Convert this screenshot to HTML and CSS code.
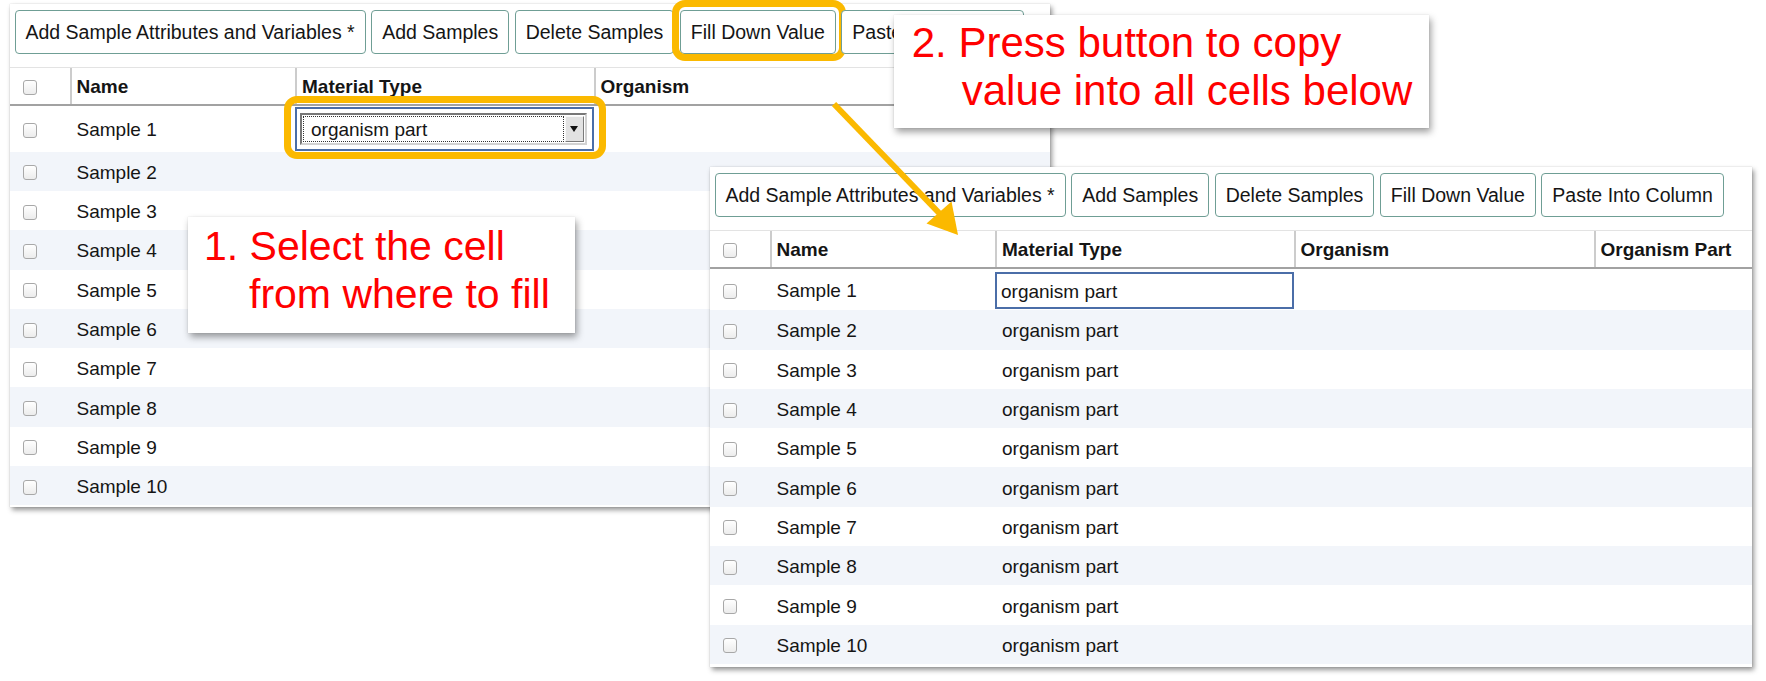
FILE: index.html
```html
<!DOCTYPE html>
<html lang="en">
<head>
<meta charset="utf-8">
<title>Fill Down Value</title>
<link rel="stylesheet" href="styles.css">
</head>
<body>
<div class="stage">

  <section class="win win-a">
    <div class="toolbar">
      <button class="btn">Add Sample Attributes and Variables *</button>
      <button class="btn">Add Samples</button>
      <button class="btn">Delete Samples</button>
      <button class="btn">Fill Down Value<span class="ring ring-btn"></span></button>
      <button class="btn">Paste Into Column</button>
    </div>
    <div class="grid">
      <div class="row head">
        <div class="cell c-chk"><span class="chk"></span></div>
        <div class="cell c-name">Name</div>
        <div class="cell c-mat">Material Type</div>
        <div class="cell c-org">Organism</div>
        <div class="cell c-part">Organism Part</div>
      </div>
      <div class="row r1a">
        <div class="cell c-chk"><span class="chk"></span></div>
        <div class="cell c-name">Sample 1</div>
        <div class="cell c-mat has-ring">
          <div class="edit-a">
            <div class="select"><span class="select-val">organism part</span><span class="select-btn"></span></div>
          </div>
          <span class="ring ring-cell"></span>
        </div>
        <div class="cell c-org"></div>
        <div class="cell c-part"></div>
      </div>
      <div class="row alt"><div class="cell c-chk"><span class="chk"></span></div><div class="cell c-name">Sample 2</div></div>
      <div class="row"><div class="cell c-chk"><span class="chk"></span></div><div class="cell c-name">Sample 3</div></div>
      <div class="row alt"><div class="cell c-chk"><span class="chk"></span></div><div class="cell c-name">Sample 4</div></div>
      <div class="row"><div class="cell c-chk"><span class="chk"></span></div><div class="cell c-name">Sample 5</div></div>
      <div class="row alt"><div class="cell c-chk"><span class="chk"></span></div><div class="cell c-name">Sample 6</div></div>
      <div class="row"><div class="cell c-chk"><span class="chk"></span></div><div class="cell c-name">Sample 7</div></div>
      <div class="row alt"><div class="cell c-chk"><span class="chk"></span></div><div class="cell c-name">Sample 8</div></div>
      <div class="row"><div class="cell c-chk"><span class="chk"></span></div><div class="cell c-name">Sample 9</div></div>
      <div class="row alt"><div class="cell c-chk"><span class="chk"></span></div><div class="cell c-name">Sample 10</div></div>
    </div>
  </section>

  <div class="callout callout-1">
    <div>1. Select the cell</div>
    <div class="l2">from where to fill</div>
  </div>

  <div class="callout callout-2">
    <div>2. Press button to copy</div>
    <div class="l2">value into all cells below</div>
  </div>

  <section class="win win-b">
    <div class="toolbar">
      <button class="btn">Add Sample Attributes and Variables *</button>
      <button class="btn">Add Samples</button>
      <button class="btn">Delete Samples</button>
      <button class="btn">Fill Down Value</button>
      <button class="btn">Paste Into Column</button>
    </div>
    <div class="grid">
      <div class="row head">
        <div class="cell c-chk"><span class="chk"></span></div>
        <div class="cell c-name">Name</div>
        <div class="cell c-mat">Material Type</div>
        <div class="cell c-org">Organism</div>
        <div class="cell c-part">Organism Part</div>
      </div>
      <div class="row r1b">
        <div class="cell c-chk"><span class="chk"></span></div>
        <div class="cell c-name">Sample 1</div>
        <div class="cell c-mat sel">organism part</div>
      </div>
      <div class="row alt"><div class="cell c-chk"><span class="chk"></span></div><div class="cell c-name">Sample 2</div><div class="cell c-mat">organism part</div></div>
      <div class="row"><div class="cell c-chk"><span class="chk"></span></div><div class="cell c-name">Sample 3</div><div class="cell c-mat">organism part</div></div>
      <div class="row alt"><div class="cell c-chk"><span class="chk"></span></div><div class="cell c-name">Sample 4</div><div class="cell c-mat">organism part</div></div>
      <div class="row"><div class="cell c-chk"><span class="chk"></span></div><div class="cell c-name">Sample 5</div><div class="cell c-mat">organism part</div></div>
      <div class="row alt"><div class="cell c-chk"><span class="chk"></span></div><div class="cell c-name">Sample 6</div><div class="cell c-mat">organism part</div></div>
      <div class="row"><div class="cell c-chk"><span class="chk"></span></div><div class="cell c-name">Sample 7</div><div class="cell c-mat">organism part</div></div>
      <div class="row alt"><div class="cell c-chk"><span class="chk"></span></div><div class="cell c-name">Sample 8</div><div class="cell c-mat">organism part</div></div>
      <div class="row"><div class="cell c-chk"><span class="chk"></span></div><div class="cell c-name">Sample 9</div><div class="cell c-mat">organism part</div></div>
      <div class="row alt"><div class="cell c-chk"><span class="chk"></span></div><div class="cell c-name">Sample 10</div><div class="cell c-mat">organism part</div></div>
    </div>
  </section>

  <svg class="arrow" viewBox="0 0 150 150" width="150" height="150" aria-hidden="true">
    <line x1="14" y1="9" x2="121" y2="120" stroke="#fbb900" stroke-width="6"/>
    <polygon points="138,140 106.5,128.5 131.5,106.5" fill="#fbb900"/>
  </svg>

</div>
</body>
</html>
```

FILE: styles.css
```css
* {
  box-sizing: border-box;
}

html,
body {
  margin: 0;
  background: #ffffff;
}

body {
  font-family: "Liberation Sans", Arial, Helvetica, sans-serif;
  color: #151515;
}

.stage {
  position: relative;
  width: 1766px;
  height: 681px;
  overflow: hidden;
}

/* screenshot windows placed on the canvas */
.win {
  position: absolute;
  background: #ffffff;
  padding: 6px 0 2px;
  box-shadow: 0 0 1px rgba(0, 0, 0, 0.22), 2px 3px 5px rgba(0, 0, 0, 0.42);
}

.win-a {
  left: 10px;
  top: 4px;
  width: 1040px;
  z-index: 1;
}

.win-b {
  left: 710px;
  top: 167px;
  width: 1042px;
  padding-bottom: 3px;
  z-index: 3;
}

/* toolbar */
.toolbar {
  display: flex;
  gap: 5.5px;
  padding-left: 4.5px;
  height: 44px;
}

.btn {
  position: relative;
  flex: none;
  height: 44px;
  padding: 1px 10px 0;
  border: 1px solid #6f9e95;
  border-radius: 4px;
  background: #ffffff;
  font-family: "Liberation Sans", Arial, Helvetica, sans-serif;
  font-size: 19.5px;
  color: #151515;
  white-space: nowrap;
}

/* grid */
.grid {
  margin-top: 12.7px;
  overflow: hidden;
}

.row {
  display: flex;
  height: 39.3px;
  align-items: stretch;
}

.row.alt {
  background: #f2f5fa;
}

.row.r1a {
  height: 45.7px;
}

.row.r1b {
  height: 41.3px;
}

.head {
  border-top: 1px solid #e3e3e3;
  border-bottom: 2px solid #a2a2a2;
  font-weight: bold;
  background: #ffffff;
}

.cell {
  flex: none;
  display: flex;
  align-items: center;
  padding-top: 3px;
  padding-left: 7px;
  font-size: 19px;
  white-space: nowrap;
}

.c-chk {
  width: 59.5px;
  padding-top: 3px;
  padding-left: 13px;
}

.c-name {
  width: 225.5px;
}

.c-mat {
  width: 298.5px;
}

.c-org {
  width: 300px;
}

.c-part {
  width: 300px;
}

.head .cell + .cell {
  border-left: 2px solid #cccccc;
  padding-left: 5px;
}

.chk {
  display: block;
  width: 14px;
  height: 15px;
  border: 1px solid #a8a8a8;
  border-radius: 3px;
  background: linear-gradient(#ffffff, #ececec);
}

/* selected / editing cells */
.has-ring {
  position: relative;
  padding-top: 0;
  padding-left: 0;
  align-items: flex-start;
}

.edit-a {
  display: flex;
  width: 100%;
  height: 44px;
  margin-top: 1px;
  padding: 4px 5px 4px 3px;
  border: 2px solid #4b6ea8;
}

.select {
  flex: 1;
  display: flex;
  border: 2px solid;
  border-color: #777777 #d2d2d2 #d2d2d2 #777777;
  background: #ffffff;
}

.select-val {
  flex: 1;
  display: flex;
  align-items: center;
  margin: 1px;
  padding-left: 7px;
  padding-top: 2px;
  border: 1px dotted #333333;
  font-size: 19px;
}

.select-btn {
  display: flex;
  align-items: center;
  justify-content: center;
  width: 19px;
  margin: 1px 1px 1px 0;
  background: #e2e2e2;
  border: 1px solid;
  border-color: #f8f8f8 #7a7a7a #7a7a7a #f8f8f8;
}

.select-btn::after {
  content: "";
  border-left: 4px solid transparent;
  border-right: 4px solid transparent;
  border-top: 6px solid #111111;
}

.sel {
  margin: 3px 0 1px;
  padding-top: 2px;
  padding-left: 4px;
  border: 2px solid #4b6ea8;
}

/* orange highlight rings */
.ring {
  position: absolute;
  border: 7px solid #fbb900;
  border-radius: 13px;
  pointer-events: none;
}

.ring-btn {
  left: -9px;
  right: -11px;
  top: -11px;
  bottom: -8px;
}

.ring-cell {
  left: -11px;
  right: -12px;
  top: -10px;
  bottom: -7px;
}

/* callouts */
.callout {
  position: absolute;
  z-index: 2;
  background: #ffffff;
  color: #ff0000;
  line-height: 48px;
  white-space: nowrap;
  box-shadow: 0 0 1px rgba(0, 0, 0, 0.15), 2px 4px 7px rgba(0, 0, 0, 0.38);
}

.callout-1 {
  left: 187.5px;
  top: 216.7px;
  width: 387.5px;
  height: 116.3px;
  padding: 5.5px 0 0 16.5px;
  font-size: 41px;
}

.callout-1 .l2 {
  padding-left: 45px;
}

.callout-2 {
  left: 894px;
  top: 14.5px;
  width: 535px;
  height: 113.5px;
  padding: 4.3px 0 0 17.7px;
  font-size: 42px;
}

.callout-2 .l2 {
  padding-left: 50px;
}

/* arrow */
.arrow {
  position: absolute;
  left: 820px;
  top: 95px;
  z-index: 5;
}
```
